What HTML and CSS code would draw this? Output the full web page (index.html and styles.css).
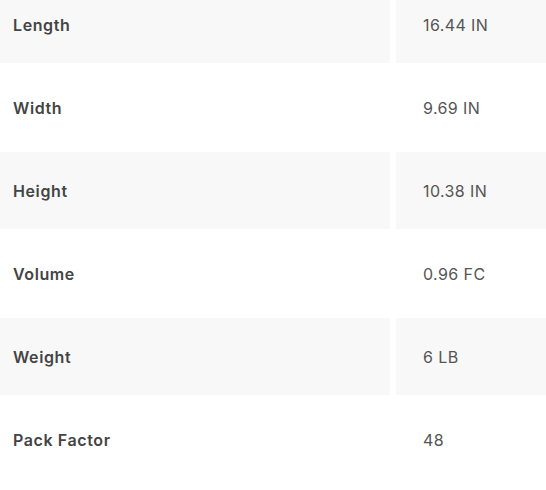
FILE: index.html
```html
<!DOCTYPE html>
<html>
<head>
<meta charset="utf-8">
<link rel="stylesheet" href="styles.css">
</head>
<body>
<div class="specs">
  <div class="label shade">Length</div><div class="value shade">16.44 IN</div>
  <div class="label">Width</div><div class="value">9.69 IN</div>
  <div class="label shade">Height</div><div class="value shade">10.38 IN</div>
  <div class="label">Volume</div><div class="value">0.96 FC</div>
  <div class="label shade">Weight</div><div class="value shade">6 LB</div>
  <div class="label">Pack Factor</div><div class="value">48</div>
</div>
</body>
</html>
```
FILE: styles.css
```css
html, body {
  margin: 0;
  padding: 0;
  background: #fff;
}
.specs {
  display: grid;
  grid-template-columns: 390px 1fr;
  grid-auto-rows: 77px;
  gap: 6px;
  margin-top: -14px;
  font-family: Inter, "Open Sans", sans-serif;
  font-size: 16px;
}
.label, .value {
  display: flex;
  align-items: center;
}
.label {
  padding-left: 13px;
  font-weight: 600;
  letter-spacing: 0.6px;
  color: #444;
}
.value {
  padding-left: 27px;
  font-weight: 400;
  letter-spacing: 0.4px;
  color: #555;
}
.shade {
  background: #f8f8f8;
}
```
